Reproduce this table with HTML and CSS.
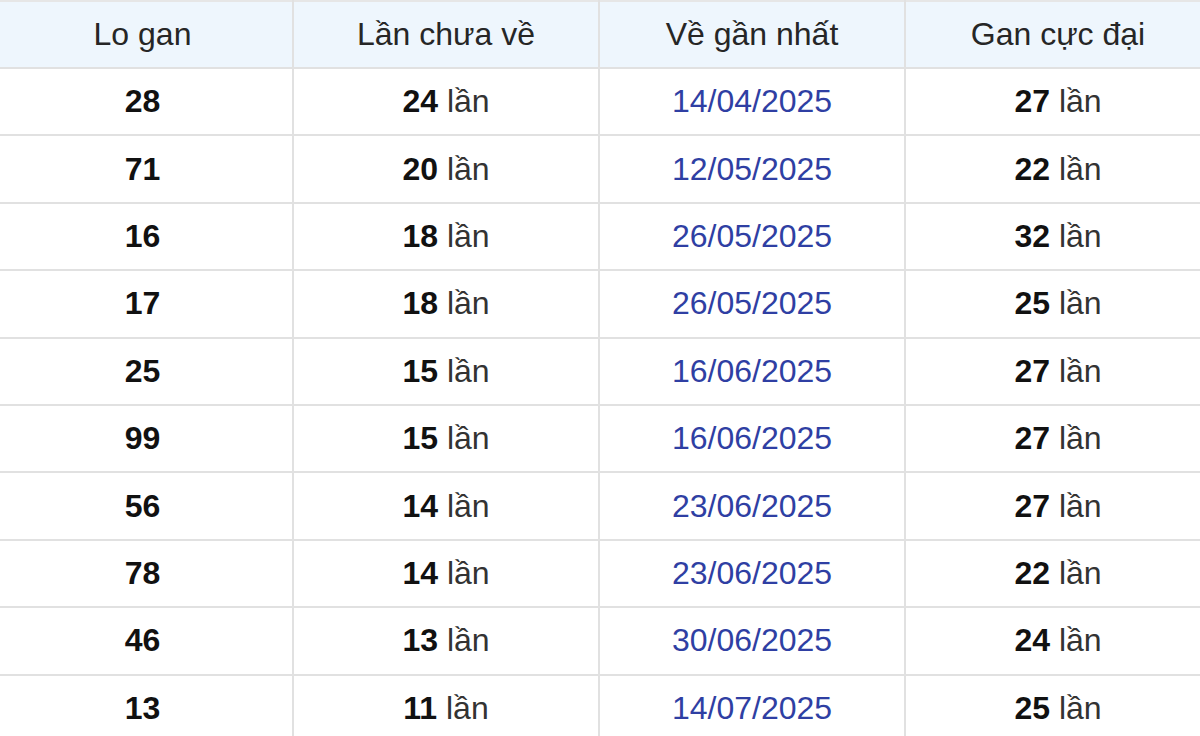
FILE: index.html
```html
<!DOCTYPE html>
<html lang="vi">
<head>
<meta charset="utf-8">
<title>Lo gan</title>
<link rel="stylesheet" href="styles.css">
</head>
<body>
<table class="gan-table">
  <colgroup>
    <col class="c1"><col class="c2"><col class="c3"><col class="c4">
  </colgroup>
  <thead>
    <tr><th>Lo gan</th><th>Lần chưa về</th><th>Về gần nhất</th><th>Gan cực đại</th></tr>
  </thead>
  <tbody>
    <tr><td class="num">28</td><td><b>24</b> lần</td><td class="date">14/04/2025</td><td><b>27</b> lần</td></tr>
    <tr><td class="num">71</td><td><b>20</b> lần</td><td class="date">12/05/2025</td><td><b>22</b> lần</td></tr>
    <tr><td class="num">16</td><td><b>18</b> lần</td><td class="date">26/05/2025</td><td><b>32</b> lần</td></tr>
    <tr><td class="num">17</td><td><b>18</b> lần</td><td class="date">26/05/2025</td><td><b>25</b> lần</td></tr>
    <tr><td class="num">25</td><td><b>15</b> lần</td><td class="date">16/06/2025</td><td><b>27</b> lần</td></tr>
    <tr><td class="num">99</td><td><b>15</b> lần</td><td class="date">16/06/2025</td><td><b>27</b> lần</td></tr>
    <tr><td class="num">56</td><td><b>14</b> lần</td><td class="date">23/06/2025</td><td><b>27</b> lần</td></tr>
    <tr><td class="num">78</td><td><b>14</b> lần</td><td class="date">23/06/2025</td><td><b>22</b> lần</td></tr>
    <tr><td class="num">46</td><td><b>13</b> lần</td><td class="date">30/06/2025</td><td><b>24</b> lần</td></tr>
    <tr><td class="num">13</td><td><b>11</b> lần</td><td class="date">14/07/2025</td><td><b>25</b> lần</td></tr>
  </tbody>
</table>
</body>
</html>
```
FILE: styles.css
```css
html, body {
  margin: 0;
  padding: 0;
  background: #ffffff;
  overflow: hidden;
}
body {
  font-family: "Liberation Sans", Arial, sans-serif;
  font-size: 32px;
  color: #222222;
}
.gan-table {
  width: 1217px;
  margin-left: -7px;
  border-collapse: collapse;
  table-layout: fixed;
}
.c1 { width: 300px; }
.c2 { width: 306px; }
.c3 { width: 306px; }
.c4 { width: 305px; }
.gan-table th,
.gan-table td {
  border: 2px solid #e1e1e1;
  text-align: center;
  vertical-align: middle;
  padding: 0;
}
.gan-table th {
  background: #eef6fd;
  font-weight: normal;
  color: #262626;
  height: 65px;
}
.gan-table tr:first-child th { border-top-color: #e6e6e6; }
.gan-table th:first-child,
.gan-table td:first-child { border-left: none; }
.gan-table th:last-child,
.gan-table td:last-child { border-right: none; }
.gan-table td {
  height: 65.4px;
  color: #333333;
}
.gan-table td b {
  color: #111111;
  font-weight: bold;
}
.gan-table td.num {
  font-weight: bold;
  color: #111111;
}
.gan-table td.date {
  color: #2f3fa3;
}
```
